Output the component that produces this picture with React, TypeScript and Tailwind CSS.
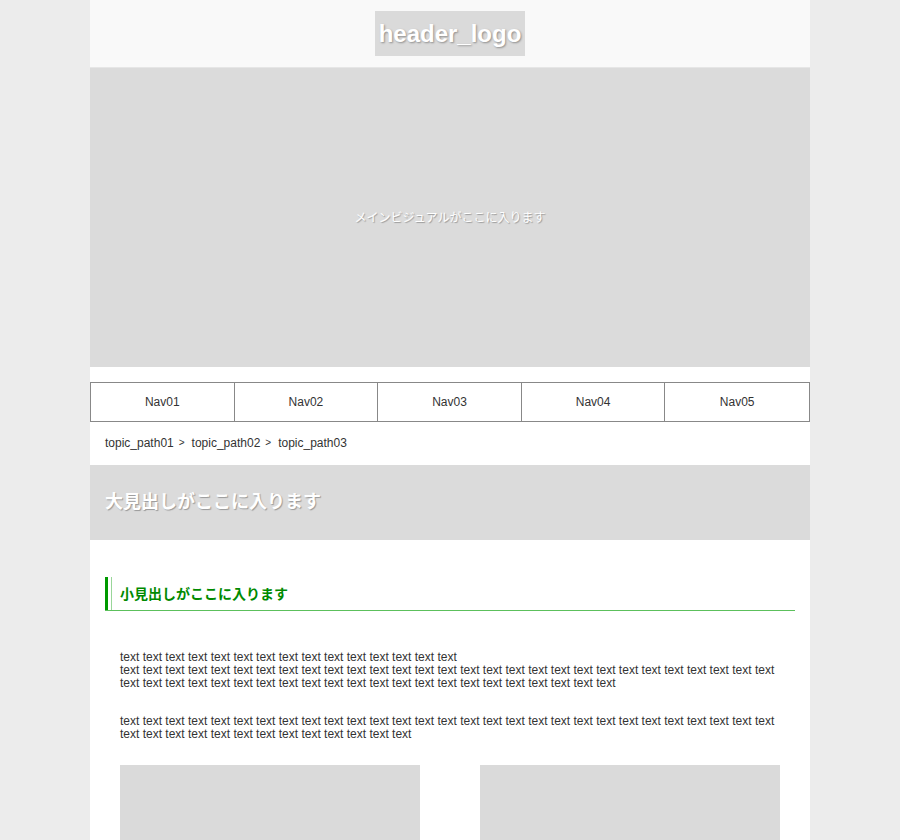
const navItems = ["Nav01", "Nav02", "Nav03", "Nav04", "Nav05"];
const crumbs = ["topic_path01", "topic_path02", "topic_path03"];

const words = (n: number) => Array(n).fill("text").join(" ");

export default function App() {
  return (
    <div
      className="min-h-screen bg-[#ececec] text-[#333]"
      style={{ fontFamily: '"Liberation Sans", Arial, "Noto Sans CJK JP", sans-serif' }}
    >
      <div className="mx-auto w-[720px] bg-white pb-10">
        <header className="flex h-[68px] items-center justify-center border-b border-[#e6e6e6] bg-[#f9f9f9]">
          <div className="flex h-[45px] w-[150px] items-center justify-center bg-[#dadada] text-[24px] font-bold text-white [text-shadow:1px_1px_2px_rgba(0,0,0,0.35)]">
            header_logo
          </div>
        </header>

        <div className="flex h-[299px] items-center justify-center bg-[#dbdbdb] text-[12px] text-white [text-shadow:1px_1px_1px_rgba(0,0,0,0.3)]">
          メインビジュアルがここに入ります
        </div>

        <nav className="mt-[15px] grid h-[40px] grid-cols-5 border border-[#888]">
          {navItems.map((item, i) => (
            <div
              key={item}
              className={`flex items-center justify-center text-[12px] ${i < navItems.length - 1 ? "border-r border-[#888]" : ""}`}
            >
              {item}
            </div>
          ))}
        </nav>

        <div className="flex h-[43px] items-center px-[15px] pb-[2px] text-[12px]">
          {crumbs.map((c, i) => (
            <span key={c} className="flex items-center">
              {c}
              {i < crumbs.length - 1 && <span className="ml-[5px] mr-[7px] text-[10px]">&gt;</span>}
            </span>
          ))}
        </div>

        <h1 className="flex h-[75px] items-center bg-[#dbdbdb] px-[15px] text-[18px] font-bold text-white [text-shadow:1px_1px_1px_rgba(0,0,0,0.3)]">
          大見出しがここに入ります
        </h1>

        <div className="mx-[15px] mt-[37px] flex h-[34px] border-b border-[#5cc05c]">
          <div className="w-[3px] bg-[#009900]" />
          <div className="ml-[3px] w-px bg-[#99d699]" />
          <h2 className="flex items-center pl-[8px] pt-[2px] text-[14px] font-bold text-[#008a00]">
            小見出しがここに入ります
          </h2>
        </div>

        <div className="px-[30px] pt-[40px] text-[12px] leading-[13px]">
          <p>
            {words(15)}
            <br />
            {words(51)}
          </p>
          <p className="mt-[25px]">{words(42)}</p>
        </div>

        <div className="mt-[24px] flex justify-between px-[30px]">
          <div className="h-[200px] w-[300px] bg-[#dadada]" />
          <div className="h-[200px] w-[300px] bg-[#dadada]" />
        </div>
      </div>
    </div>
  );
}
